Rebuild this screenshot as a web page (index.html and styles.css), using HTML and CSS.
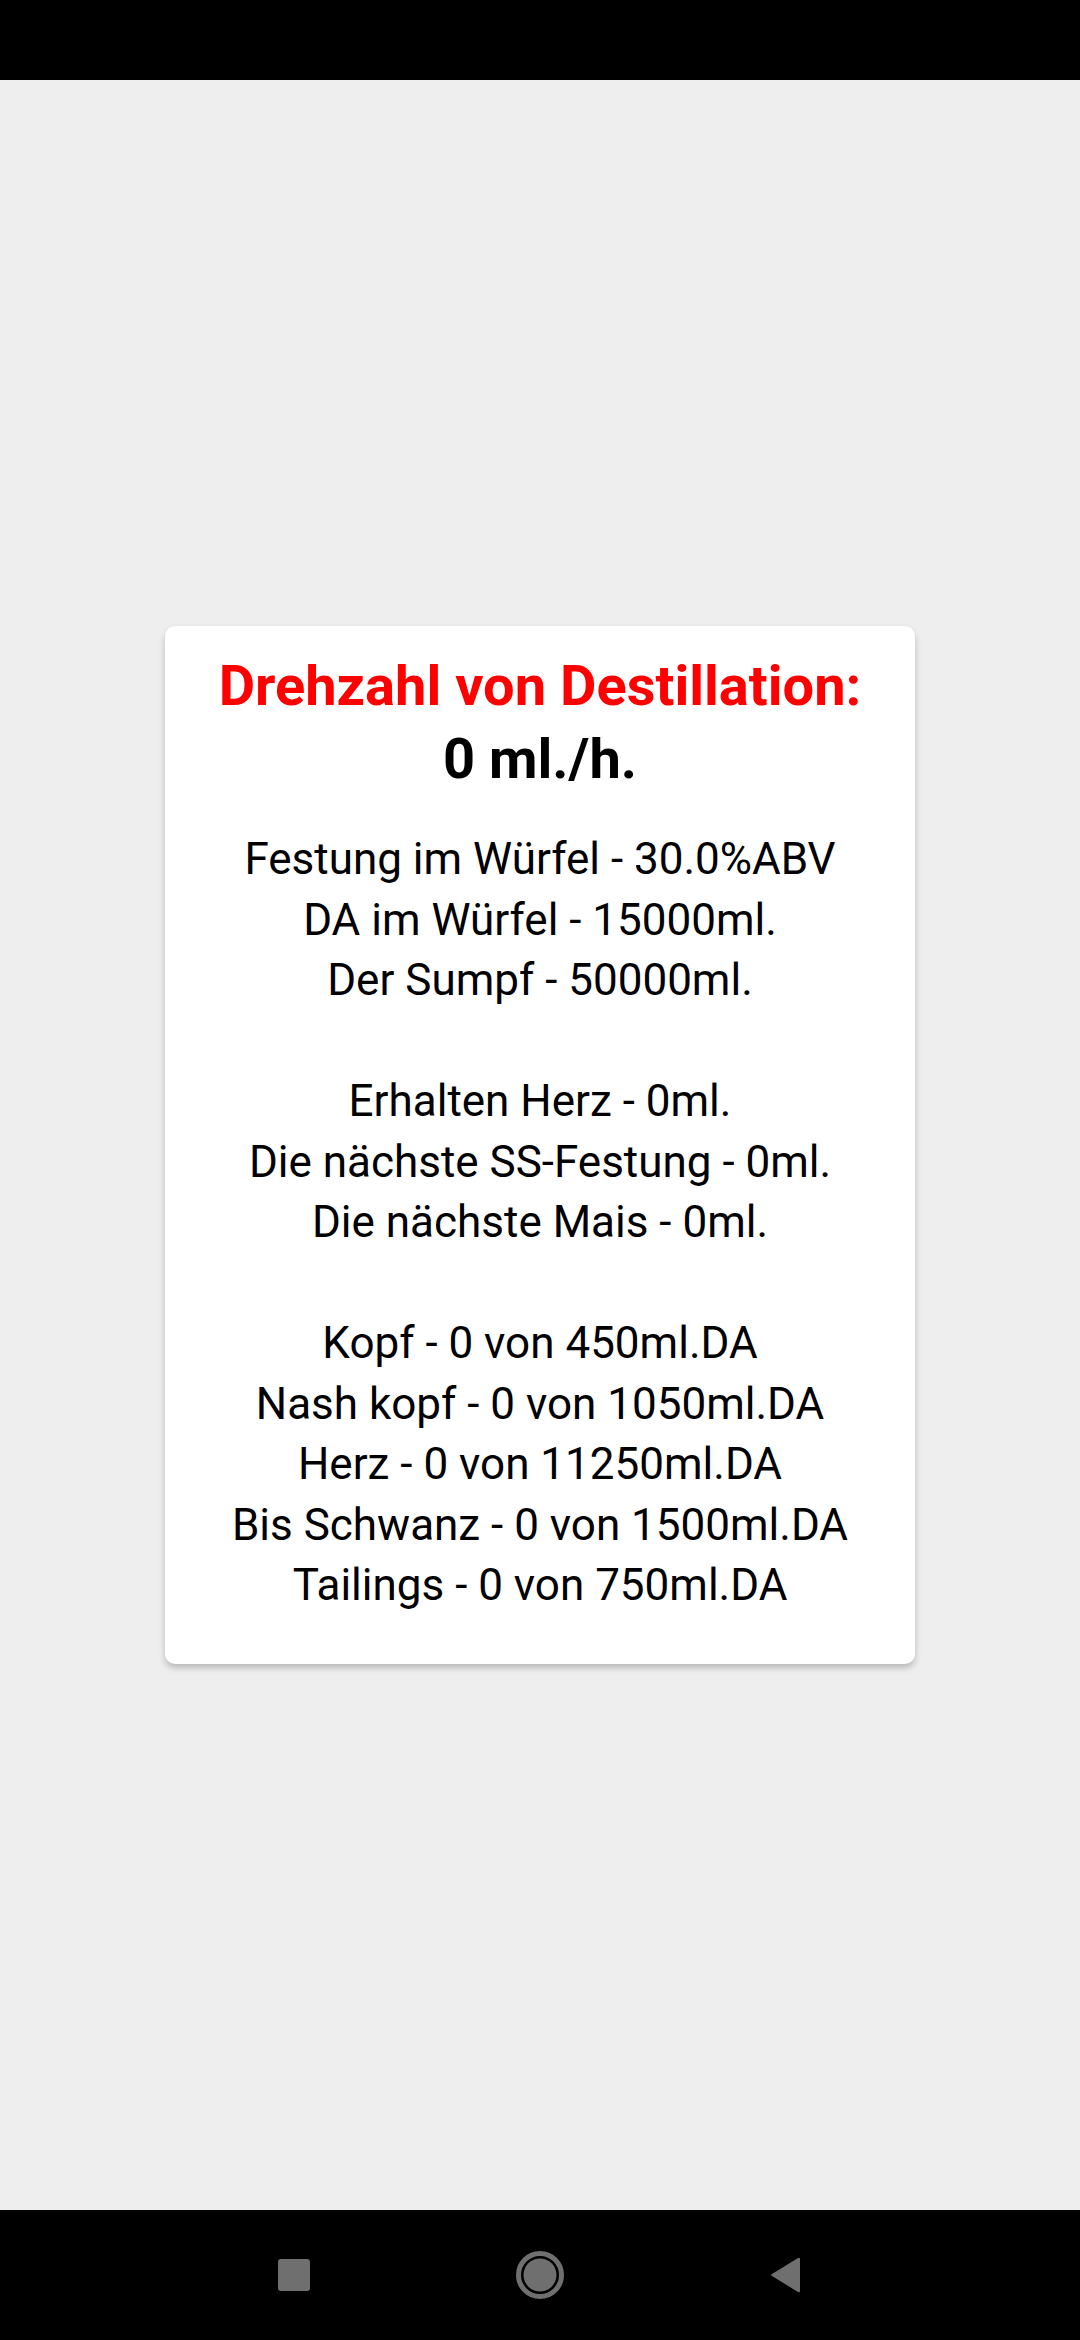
FILE: index.html
```html
<!DOCTYPE html>
<html>
  <head>
    <meta charset="utf-8" />
    <title>Destillation</title>
    <meta name="viewport" content="width=device-width, initial-scale=1.0" />
    <link rel="stylesheet" href="styles.css">
  </head>
  <body>
    <div class="status-bar"></div>

    <main class="screen">
      <div class="card">
        <h1 class="title">Drehzahl von Destillation:</h1>
        <h2 class="rate">0 ml./h.</h2>

        <div class="info">
          <p class="group">
            Festung im Würfel - 30.0%ABV<br />
            DA im Würfel - 15000ml.<br />
            Der Sumpf - 50000ml.
          </p>
          <p class="group">
            Erhalten Herz - 0ml.<br />
            Die nächste SS-Festung - 0ml.<br />
            Die nächste Mais - 0ml.
          </p>
          <p class="group">
            Kopf - 0 von 450ml.DA<br />
            Nash kopf - 0 von 1050ml.DA<br />
            Herz - 0 von 11250ml.DA<br />
            Bis Schwanz - 0 von 1500ml.DA<br />
            Tailings - 0 von 750ml.DA
          </p>
        </div>
      </div>
    </main>

    <nav class="nav-bar">
      <div class="nav-item">
        <svg width="32" height="32" viewBox="0 0 32 32">
          <rect x="0" y="0" width="32" height="32" rx="3" fill="#6f6f6f" />
        </svg>
      </div>
      <div class="nav-item">
        <svg width="50" height="50" viewBox="0 0 50 50">
          <circle cx="25" cy="25" r="21.5" fill="none" stroke="#6f6f6f" stroke-width="5" />
          <circle cx="25" cy="25" r="16.5" fill="#6f6f6f" />
        </svg>
      </div>
      <div class="nav-item">
        <svg width="34" height="38" viewBox="0 0 34 38">
          <path d="M31 3 L31 35 Q31 37 29 36 L3 20 Q1 19 3 18 L29 2 Q31 1 31 3 Z" fill="#6f6f6f" />
        </svg>
      </div>
    </nav>
  </body>
</html>
```

FILE: styles.css
```css
html,
body {
  height: 100%;
}

body {
  margin: 0;
  display: flex;
  flex-direction: column;
  background: #eeeeee;
  font-family: Roboto, "Liberation Sans", Arial, sans-serif;
}

.status-bar {
  height: 80px;
  flex: none;
  background: #000;
}

/* the card sits in the middle of the free space */
.screen {
  flex: 1;
  display: flex;
  align-items: center;
  justify-content: center;
}

.card {
  width: 750px;
  padding: 24px 0 48px;
  background: #fff;
  border-radius: 10px;
  box-shadow: 0 4px 6px rgba(0, 0, 0, 0.22);
  text-align: center;
}

.title,
.rate {
  margin: 0;
  font-size: 56px;
  font-weight: 700;
  line-height: 73px;
}

.title {
  color: #ff0000;
}

.rate {
  color: #000;
}

.info {
  margin-top: 33px;
}

.group {
  margin: 60.5px 0 0;
  font-size: 44px;
  line-height: 60.5px;
  color: #000;
}

.group:first-child {
  margin-top: 0;
}

.nav-bar {
  height: 130px;
  flex: none;
  display: flex;
  align-items: center;
  justify-content: center;
  background: #000;
}

.nav-item {
  width: 246px;
  display: flex;
  justify-content: center;
  align-items: center;
}

.nav-item svg {
  display: block;
}
```
